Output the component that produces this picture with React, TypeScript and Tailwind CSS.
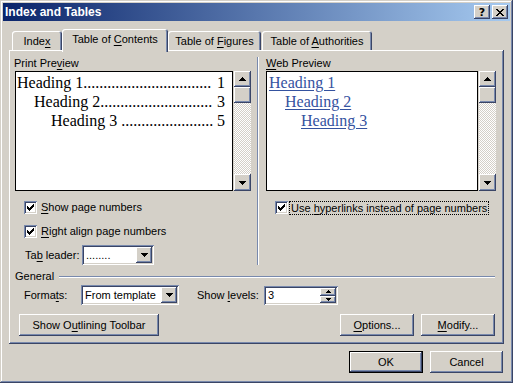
import React from "react";

const RAISED =
  "shadow-[inset_-1px_-1px_#3a4566,inset_1px_1px_#ffffff,inset_-2px_-2px_#7889ad,inset_2px_2px_#d4d0c8]";
const SUNKEN =
  "shadow-[inset_1px_1px_#7889ad,inset_-1px_-1px_#ffffff,inset_2px_2px_#3a4566,inset_-2px_-2px_#d4d0c8]";
const FRAME =
  "shadow-[inset_-1px_-1px_#3a4566,inset_1px_1px_#d4d0c8,inset_-2px_-2px_#7889ad,inset_2px_2px_#ffffff]";
const PANEL =
  "shadow-[inset_-1px_-1px_#3a4566,inset_1px_1px_#ffffff,inset_-2px_-2px_#7889ad]";

function M({ children }: { children: React.ReactNode }) {
  return <span className="underline underline-offset-[2px] decoration-1">{children}</span>;
}

function Tri({ up = false, size = 7 }: { up?: boolean; size?: number }) {
  const rows = size === 7 ? [7, 5, 3, 1] : [5, 3, 1];
  const h = rows.length;
  return (
    <svg width={size} height={h} shapeRendering="crispEdges" className="block">
      {rows.map((w, i) => (
        <rect key={i} x={(size - w) / 2} y={up ? h - 1 - i : i} width={w} height={1} fill="#000" />
      ))}
    </svg>
  );
}

function Pixels({ w, h, px }: { w: number; h: number; px: number[][] }) {
  return (
    <svg width={w} height={h} shapeRendering="crispEdges" className="block">
      {px.map(([x, y], i) => (
        <rect key={i} x={x} y={y} width={1} height={1} fill="#000" />
      ))}
    </svg>
  );
}

const CHECK = [
  [6, 0], [5, 1], [6, 1], [0, 2], [4, 2], [5, 2], [6, 2], [0, 3], [1, 3], [3, 3], [4, 3], [5, 3],
  [0, 4], [1, 4], [2, 4], [3, 4], [4, 4], [1, 5], [2, 5], [3, 5], [2, 6],
];

const CLOSE = (() => {
  const rows = ["XX....XX", ".XX..XX.", "..XXXX..", "...XX...", "..XXXX..", ".XX..XX.", "XX....XX"];
  const out: number[][] = [];
  rows.forEach((r, y) => r.split("").forEach((c, x) => c === "X" && out.push([x, y])));
  return out;
})();

function CheckBox() {
  return (
    <div className={`w-[13px] h-[13px] bg-white ${SUNKEN} flex items-center justify-center shrink-0`}>
      <Pixels w={7} h={7} px={CHECK} />
    </div>
  );
}

function ScrollBar() {
  return (
    <div className="w-[17px] h-full flex flex-col">
      <div className={`h-[16px] ${RAISED} flex items-center justify-center`}>
        <Tri up />
      </div>
      <div className={`h-[16px] ${RAISED}`} />
      <div className="flex-1 bg-[repeating-conic-gradient(#ffffff_0%_25%,#d4d0c8_0%_50%)] bg-[length:2px_2px]" />
      <div className={`h-[17px] ${RAISED} flex items-center justify-center`}>
        <Tri />
      </div>
    </div>
  );
}

function Combo({ className, children }: { className: string; children: React.ReactNode }) {
  return (
    <div className={`${SUNKEN} bg-white h-[20px] flex items-center pl-[4px] pr-[2px] ${className}`}>
      <span className="flex-1 whitespace-nowrap">{children}</span>
      <div className={`w-[16px] h-[16px] ${RAISED} bg-[#d4d0c8] flex items-center justify-center`}>
        <Tri />
      </div>
    </div>
  );
}

function Btn({ className, children }: { className: string; children: React.ReactNode }) {
  return (
    <div className={`${RAISED} h-[22px] flex items-center justify-center whitespace-nowrap ${className}`}>
      {children}
    </div>
  );
}

function TocLine({
  indent,
  text,
  num,
  dots,
  gap,
}: {
  indent: string;
  text: string;
  num: string;
  dots: string;
  gap?: boolean;
}) {
  return (
    <div className={`flex h-[19px] leading-[19px] whitespace-nowrap ${indent}`}>
      <span>{text}</span>
      <span className={gap ? "ml-[4px]" : ""}>{dots}</span>
      <span className="ml-auto">{num}</span>
    </div>
  );
}

function Tab({ className, children, active }: { className: string; children: React.ReactNode; active?: boolean }) {
  return (
    <div
      className={`rounded-t-[3px] bg-[#d4d0c8] shadow-[inset_1px_1px_#ffffff,inset_-1px_0_#3a4566,inset_-2px_0_#7889ad] flex justify-center whitespace-nowrap ${
        active ? "h-[23px] -mb-[2px] relative z-10 pt-[4px]" : "h-[19px] pt-[4px]"
      } ${className}`}
    >
      {children}
    </div>
  );
}

export default function App() {
  return (
    <div
      className={`w-[513px] h-[383px] bg-[#d4d0c8] p-[3px] ${FRAME} font-['Liberation_Sans',Arial,sans-serif] text-[11px] leading-[13px] text-black flex flex-col`}
    >
      {/* Title bar */}
      <div className="h-[18px] flex items-center bg-[linear-gradient(to_right,#0a246a,#a6caf0)] pl-[2px] pr-[2px]">
        <span className="flex-1 text-white font-bold text-[12px]">Index and Tables</span>
        <div className="flex gap-[2px]">
          <div className={`w-[16px] h-[14px] ${RAISED} bg-[#d4d0c8] flex items-center justify-center font-bold text-[11px] leading-[11px] font-['DejaVu_Sans',sans-serif]`}>
            ?
          </div>
          <div className={`w-[16px] h-[14px] ${RAISED} bg-[#d4d0c8] flex items-center justify-center`}>
            <Pixels w={8} h={7} px={CLOSE} />
          </div>
        </div>
      </div>

      {/* Tabs */}
      <div className="mt-[8px] h-[21px] flex items-end pl-[9px]">
        <Tab className="w-[50px]">
          <span>Inde<M>x</M></span>
        </Tab>
        <Tab className="w-[106px]" active>
          <span>Table of <M>C</M>ontents</span>
        </Tab>
        <Tab className="w-[93px]">
          <span>Table of <M>F</M>igures</span>
        </Tab>
        <Tab className="w-[110px] ml-[1px]">
          <span>Table of <M>A</M>uthorities</span>
        </Tab>
      </div>

      {/* Panel */}
      <div className={`mx-[6px] h-[294px] ${PANEL} flex flex-col`}>
        <div className="flex h-[215px]">
          {/* Left column */}
          <div className="w-[248px] flex flex-col pt-[7px]">
            <div className="pl-[5px] h-[13px] mb-[1px]">
              Print Pre<M>v</M>iew
            </div>
            <div className="ml-[6px] h-[120px] flex">
              <div className="w-[218px] h-full bg-white border border-black pt-[1px] pl-[1px] pr-[7px] font-['Liberation_Serif',serif] text-[16px] overflow-hidden">
                <TocLine indent="" text="Heading 1" num="1" dots={".".repeat(32)} />
                <TocLine indent="pl-[17px]" text="Heading 2" num="3" dots={".".repeat(28)} />
                <TocLine indent="pl-[34px]" text="Heading 3" num="5" dots={".".repeat(23)} gap />
              </div>
              <div className="ml-[1px] h-full">
                <ScrollBar />
              </div>
            </div>
            <div className="mt-[10px] ml-[15px] flex items-center gap-[4px] h-[13px]">
              <CheckBox />
              <span>
                <M>S</M>how page numbers
              </span>
            </div>
            <div className="mt-[11px] ml-[15px] flex items-center gap-[4px] h-[13px]">
              <CheckBox />
              <span>
                <M>R</M>ight align page numbers
              </span>
            </div>
            <div className="mt-[7px] ml-[16px] flex items-center h-[20px]">
              <span className="w-[57px]">
                Ta<M>b</M> leader:
              </span>
              <Combo className="w-[72px]">........</Combo>
            </div>
          </div>

          {/* Separator */}
          <div className="mt-[7px] w-[2px] border-l border-l-[#7889ad] border-r border-r-white" />

          {/* Right column */}
          <div className="flex-1 flex flex-col pt-[7px]">
            <div className="pl-[7px] h-[13px] mb-[1px]">
              <M>W</M>eb Preview
            </div>
            <div className="ml-[7px] h-[120px] flex">
              <div className="w-[212px] h-full bg-white border border-black pt-[1px] pl-[2px] font-['Liberation_Serif',serif] text-[16px] leading-[19px] text-[#34529f]">
                <div className="h-[19px]">
                  <span className="underline underline-offset-[2px]">Heading 1</span>
                </div>
                <div className="h-[19px] pl-[16px]">
                  <span className="underline underline-offset-[2px]">Heading 2</span>
                </div>
                <div className="h-[19px] pl-[32px]">
                  <span className="underline underline-offset-[2px]">Heading 3</span>
                </div>
              </div>
              <div className="ml-[1px] h-full">
                <ScrollBar />
              </div>
            </div>
            <div className="mt-[10px] ml-[16px] flex items-center gap-[2px] h-[13px]">
              <CheckBox />
              <span className="outline outline-1 outline-dotted outline-black px-[1px] leading-[12px]">
                Use <M>h</M>yperlinks instead of page numbers
              </span>
            </div>
          </div>
        </div>

        {/* General */}
        <div className="mt-[5px] h-[13px] flex items-center pl-[6px] pr-[9px]">
          <span>General</span>
          <div className="flex-1 ml-[5px] h-[2px] border-t border-t-[#7889ad] border-b border-b-white" />
        </div>

        <div className="mt-[2px] h-[20px] flex items-center pl-[15px]">
          <span className="w-[57px]">
            Forma<M>t</M>s:
          </span>
          <Combo className="w-[98px]">From template</Combo>
          <span className="ml-[18px] w-[67px]">
            Show <M>l</M>evels:
          </span>
          <div className={`${SUNKEN} bg-white w-[74px] h-[19px] flex items-center pl-[4px] pr-[2px]`}>
            <span className="flex-1">3</span>
            <div className="w-[16px] h-[15px] flex flex-col">
              <div className={`h-[8px] ${RAISED} bg-[#d4d0c8] flex items-center justify-center`}>
                <Tri up size={5} />
              </div>
              <div className={`h-[7px] ${RAISED} bg-[#d4d0c8] flex items-center justify-center`}>
                <Tri size={5} />
              </div>
            </div>
          </div>
        </div>

        <div className="mt-[9px] h-[22px] flex items-center pl-[10px] pr-[9px]">
          <Btn className="w-[140px]">
            <span>
              Show O<M>u</M>tlining Toolbar
            </span>
          </Btn>
          <div className="flex-1" />
          <Btn className="w-[74px]">
            <span>
              <M>O</M>ptions...
            </span>
          </Btn>
          <Btn className="w-[74px] ml-[7px]">
            <span>
              <M>M</M>odify...
            </span>
          </Btn>
        </div>
      </div>

      {/* OK / Cancel */}
      <div className="mt-[7px] h-[22px] flex justify-end pr-[7px] gap-[7px]">
        <div className="w-[74px] h-[22px] border border-black">
          <div className={`w-full h-full ${RAISED} flex items-center justify-center`}>OK</div>
        </div>
        <Btn className="w-[73px]">Cancel</Btn>
      </div>
    </div>
  );
}
